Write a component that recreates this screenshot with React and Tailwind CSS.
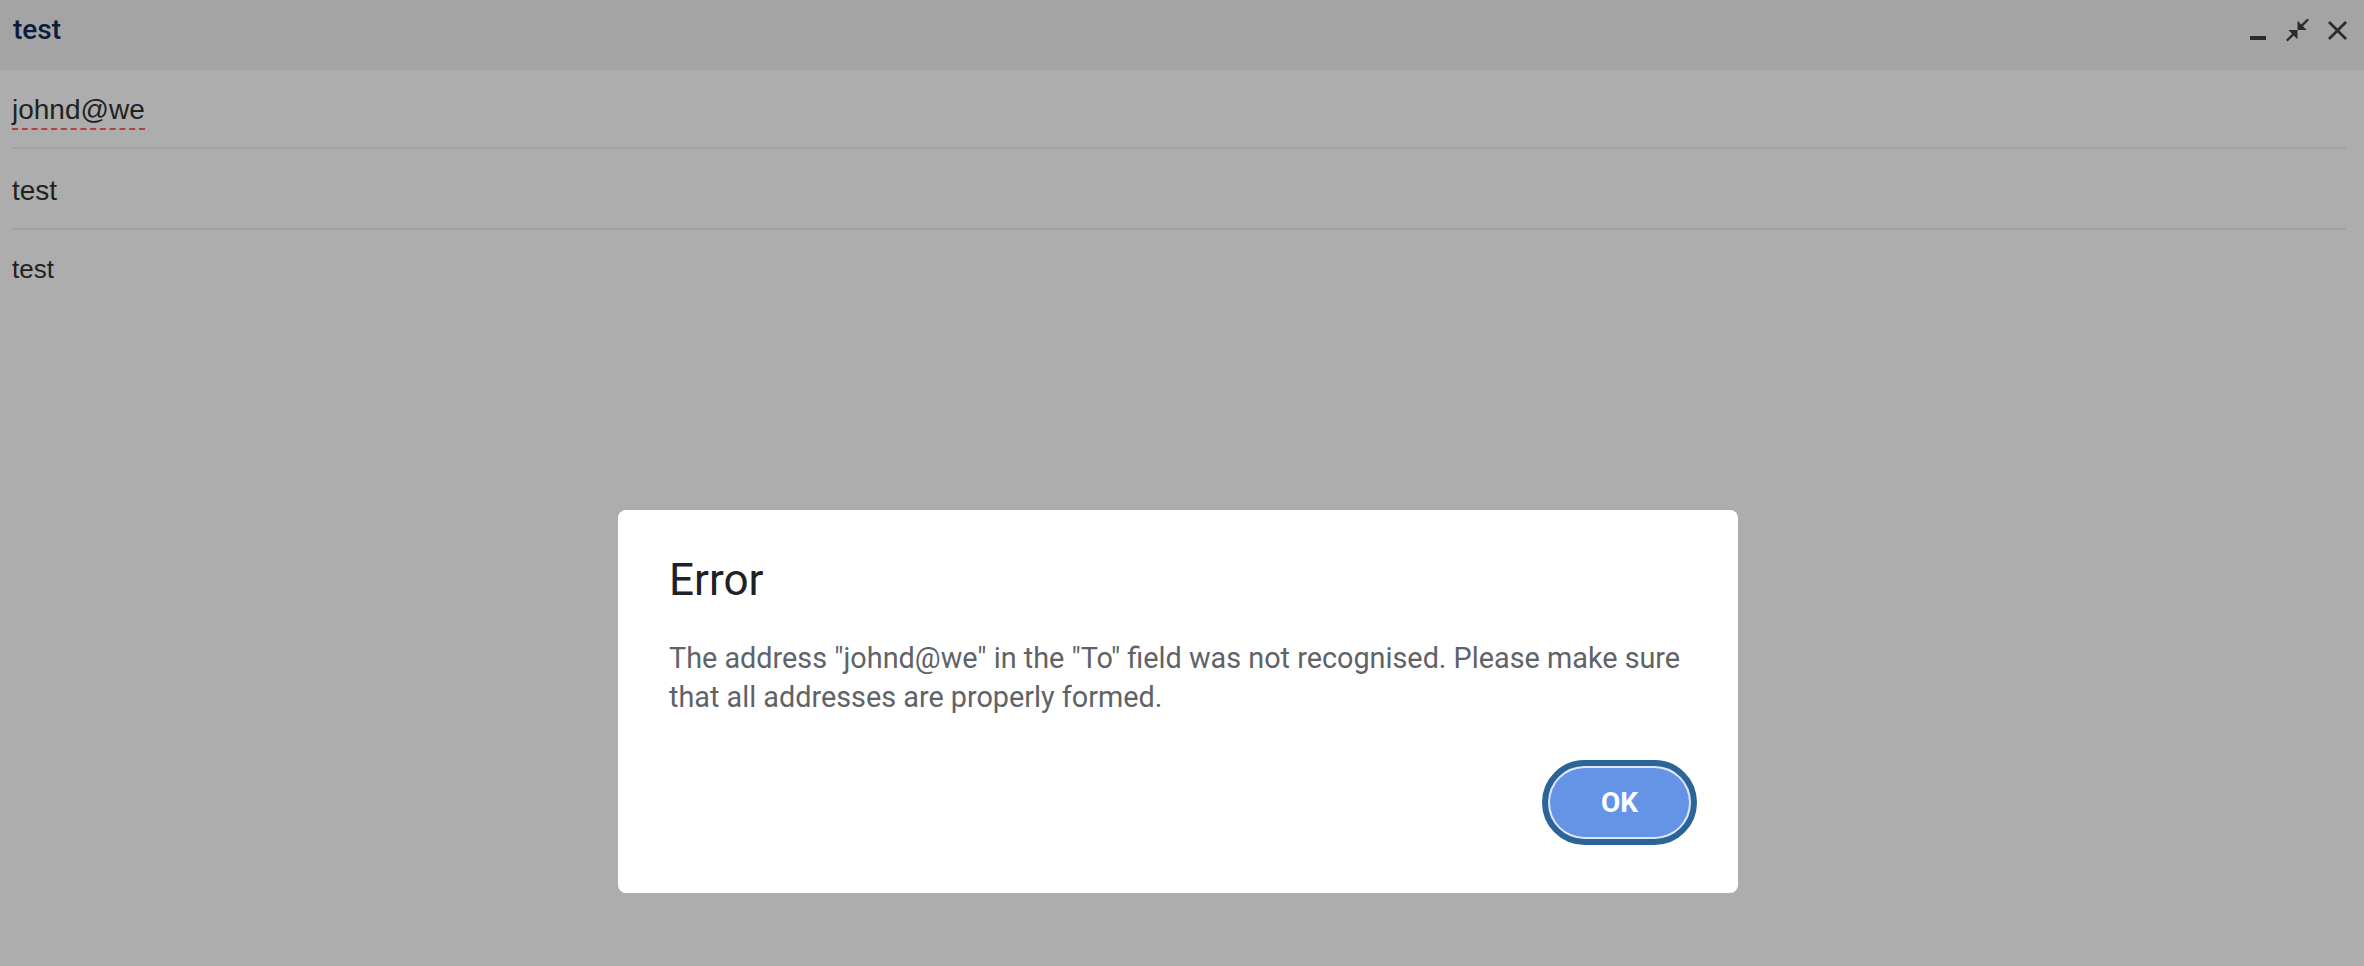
import React from 'react'

function MinimizeIcon() {
  return <div className="w-[16px] h-[4px] bg-[#2b2b2b] mt-[18px]" />
}

function CompressIcon() {
  return (
    <svg viewBox="2 2 20 20" width="23" height="24" fill="#2b2b2b">
      <path d="M22 3.41 16.71 8.7 20 12h-8V4l3.29 3.29L20.59 2 22 3.41zM3.41 22l5.29-5.29L12 20v-8H4l3.29 3.29L2 20.59 3.41 22z" />
    </svg>
  )
}

function CloseIcon() {
  return (
    <svg viewBox="5 5 14 14" width="19" height="19" fill="#2b2b2b">
      <path d="M19 6.41 17.59 5 12 10.59 6.41 5 5 6.41 10.59 12 5 17.59 6.41 19 12 13.41 17.59 19 19 17.59 13.41 12z" />
    </svg>
  )
}

export default function App() {
  return (
    <main className="relative w-full h-[966px] bg-[#adadad] overflow-hidden">
      <header className="h-[70px] bg-[#a4a4a4] flex justify-between pl-[13px] pr-[17px]">
        <h1 className="pt-[14px] text-[28px] leading-[32px] font-medium text-[#0c1c3c] font-['Roboto',sans-serif]">
          test
        </h1>
        <div className="flex items-start pt-[18px]">
          <MinimizeIcon />
          <div className="ml-[20px]">
            <CompressIcon />
          </div>
          <div className="ml-[19px] mt-[3px]">
            <CloseIcon />
          </div>
        </div>
      </header>

      <div className="pl-3 pr-[18px] font-['Liberation_Sans',Arial,sans-serif] text-[#222222]">
        <div className="h-[79px] border-b-2 border-[#a2a2a2] pt-[24px]">
          <span className="inline-block text-[28px] leading-[32px] border-b-2 border-dashed border-[#b5423a] pb-[2px]">
            johnd@we
          </span>
        </div>
        <div className="h-[81px] border-b-2 border-[#a2a2a2] pt-[26px] text-[28px] leading-[32px]">
          test
        </div>
        <div className="pt-[24px] text-[26px] leading-[30px]">
          test
        </div>
      </div>

      {/* error dialog sits over the compose window */}
      <div className="absolute left-[618px] top-[510px] w-[1120px] h-[383px] bg-white rounded-[8px] pl-[51px] pr-[41px] pt-[44px] font-['Roboto',sans-serif]">
        <h2 className="text-[44px] leading-[52px] text-[#202124]">Error</h2>
        <p className="mt-[33px] text-[28.8px] leading-[39px] text-[#5f6368] whitespace-nowrap">
          The address "johnd@we" in the "To" field was not recognised. Please make sure
          <br />
          that all addresses are properly formed.
        </p>
        <div className="flex justify-end mt-[43px]">
          <button className="w-[155px] h-[85px] rounded-full border-[6px] border-[#2a6498] bg-[#dce7fb] p-[2px]">
            <span className="flex w-full h-full items-center justify-center rounded-full bg-[#6594e6] text-white text-[28px] font-bold">
              OK
            </span>
          </button>
        </div>
      </div>
    </main>
  )
}
